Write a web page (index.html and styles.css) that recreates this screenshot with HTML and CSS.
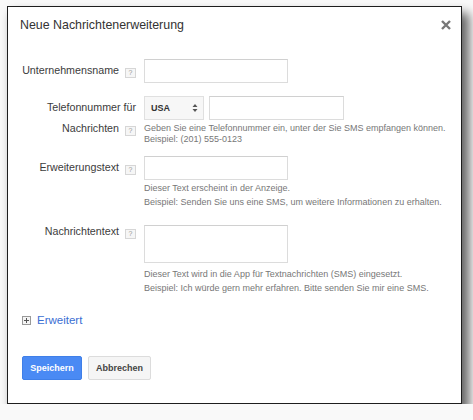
FILE: index.html
```html
<!DOCTYPE html>
<html lang="de">
<head>
  <meta charset="UTF-8" />
  <title>Neue Nachrichtenerweiterung</title>
  <link rel="stylesheet" href="styles.css">
</head>
<body>

  <div class="dialog">
    <div class="dialog-head">
      <h2>Neue Nachrichtenerweiterung</h2>
      <span class="close">
        <svg width="10" height="10" viewBox="0 0 10 10"><path d="M1 1L9 9M9 1L1 9" stroke="#777" stroke-width="2.4"/></svg>
      </span>
    </div>

    <div class="row row-name">
      <div class="label">Unternehmensname<span class="help">?</span></div>
      <div class="field">
        <input type="text" class="text-input" />
      </div>
    </div>

    <div class="row row-phone">
      <div class="label label-two">Telefonnummer für<br>Nachrichten<span class="help">?</span></div>
      <div class="field">
        <div class="phone">
          <div class="select">
            <span>USA</span>
            <svg width="6" height="10" viewBox="0 0 6 10"><path d="M0.5 4L3 1L5.5 4Z M0.5 6L3 9L5.5 6Z" fill="#555"/></svg>
          </div>
          <input type="text" class="text-input phone-input" />
        </div>
        <div class="hint hint-tight">
          Geben Sie eine Telefonnummer ein, unter der Sie SMS empfangen können.<br>
          Beispiel: (201) 555-0123
        </div>
      </div>
    </div>

    <div class="row row-ext">
      <div class="label">Erweiterungstext<span class="help">?</span></div>
      <div class="field">
        <input type="text" class="text-input" />
        <div class="hint">
          Dieser Text erscheint in der Anzeige.<br>
          Beispiel: Senden Sie uns eine SMS, um weitere Informationen zu erhalten.
        </div>
      </div>
    </div>

    <div class="row row-msg">
      <div class="label label-top">Nachrichtentext<span class="help">?</span></div>
      <div class="field">
        <textarea class="text-input area"></textarea>
        <div class="hint hint-area">
          Dieser Text wird in die App für Textnachrichten (SMS) eingesetzt.<br>
          Beispiel: Ich würde gern mehr erfahren. Bitte senden Sie mir eine SMS.
        </div>
      </div>
    </div>

    <div class="more">
      <span class="plus">
        <svg width="9" height="9" viewBox="0 0 9 9"><rect x="0.5" y="0.5" width="8" height="8" fill="#f4f4f4" stroke="#999"/><path d="M2 4.5H7M4.5 2V7" stroke="#555"/></svg>
      </span>
      <a href="#">Erweitert</a>
    </div>

    <div class="actions">
      <button class="btn btn-primary">Speichern</button>
      <button class="btn">Abbrechen</button>
    </div>
  </div>

</body>
</html>
```

FILE: styles.css
```css
* { box-sizing: border-box; }

body {
  margin: 0;
  background: #f9f9f9;
  font-family: "Liberation Sans", Arial, sans-serif;
  color: #444;
}

.dialog {
  position: relative;
  margin: 6px 0 0 7px;
  width: 455px;
  height: 398px;
  background: #fff;
  border: 1px solid #1e1e1e;
  box-shadow: 6px 8px 10px 1px rgba(0, 0, 0, 0.6);
}

.dialog-head {
  display: flex;
  justify-content: space-between;
  align-items: center;
  padding: 8px 10px 0 12px;
  height: 28px;
}

.dialog-head h2 {
  margin: 0;
  font-size: 12.4px;
  font-weight: normal;
  color: #333;
  line-height: 20px;
}

.close {
  display: flex;
}

.row {
  display: flex;
  align-items: flex-start;
}

.row-name { margin-top: 24px; }
.row-phone { margin-top: 13px; }
.row-ext { margin-top: 11px; }
.row-msg { margin-top: 16px; }

.label {
  width: 136px;
  padding-right: 8px;
  text-align: right;
  font-size: 10.7px;
  line-height: 23px;
  color: #3c3c3c;
}

.label-two {
  line-height: 21px;
  padding-top: 1px;
}

.label-top {
  line-height: 13px;
}

.help {
  display: inline-block;
  width: 11px;
  height: 10px;
  margin-left: 6px;
  border: 1px solid #d6d6d6;
  background: #f6f6f6;
  color: #999;
  font-size: 7px;
  line-height: 8px;
  text-align: center;
  vertical-align: -1px;
}

.field {
  flex: 1;
}

.text-input {
  display: block;
  width: 144px;
  height: 24px;
  margin: 0;
  border: 1px solid #dcdcdc;
  border-top-color: #d0d0d0;
  background: #fff;
  font-family: inherit;
  font-size: 11px;
}

.phone {
  display: flex;
  gap: 5px;
}

.select {
  display: flex;
  align-items: center;
  justify-content: space-between;
  width: 60px;
  height: 24px;
  padding: 0 5px 0 6px;
  border: 1px solid #e0e0e0;
  background: #f7f7f7;
  font-size: 9px;
  font-weight: bold;
  color: #333;
}

.phone-input {
  width: 135px;
}

.area {
  height: 38px;
  resize: none;
}

.hint {
  margin-top: 1px;
  font-size: 9px;
  line-height: 14px;
  color: #777;
}

.hint-tight {
  margin-top: 3px;
  line-height: 11px;
}

.hint-area {
  margin-top: 4px;
}

.more {
  display: flex;
  align-items: center;
  gap: 6px;
  height: 14px;
  margin: 18px 0 0 14px;
}

.plus {
  display: flex;
}

.more a {
  color: #3a6ed3;
  text-decoration: none;
  font-size: 11.5px;
  line-height: 14px;
}

.actions {
  display: flex;
  gap: 6px;
  margin: 29px 0 0 14px;
}

.btn {
  height: 24px;
  padding: 0 7px;
  font-family: inherit;
  font-size: 9px;
  font-weight: bold;
  color: #444;
  background: #f5f5f5;
  border: 1px solid #dcdcdc;
  border-radius: 2px;
  cursor: pointer;
}

.btn-primary {
  width: 60px;
  background: #4a8af4;
  border-color: #3f7fe8;
  color: #fff;
}
```
